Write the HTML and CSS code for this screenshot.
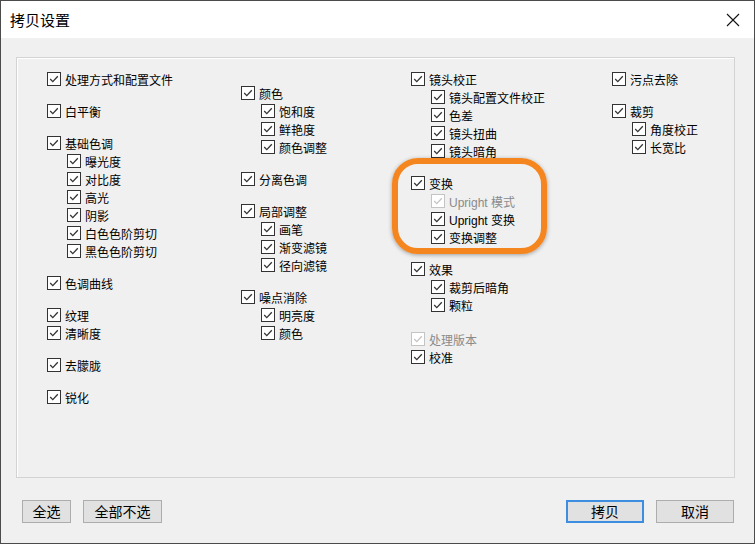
FILE: index.html
```html
<!DOCTYPE html>
<html lang="zh-CN">
<head>
  <meta charset="UTF-8" />
  <title>拷贝设置</title>
  <link rel="stylesheet" href="styles.css">
</head>
<body>
  <div class="window">
    <div class="titlebar">
      <span class="title">拷贝设置</span>
      <svg class="close" width="14" height="14" viewBox="0 0 14 14"><path d="M1 1 L13 13 M13 1 L1 13" stroke="#111" stroke-width="1.1" fill="none"/></svg>
    </div>

    <div class="content">
      <div class="groupbox">
        <!-- column 1 -->
        <div class="col">
          <div class="grp">
            <div class="item"><span class="cb"></span>处理方式和配置文件</div>
          </div>
          <div class="grp">
            <div class="item"><span class="cb"></span>白平衡</div>
          </div>
          <div class="grp">
            <div class="item"><span class="cb"></span>基础色调</div>
            <div class="item sub"><span class="cb"></span>曝光度</div>
            <div class="item sub"><span class="cb"></span>对比度</div>
            <div class="item sub"><span class="cb"></span>高光</div>
            <div class="item sub"><span class="cb"></span>阴影</div>
            <div class="item sub"><span class="cb"></span>白色色阶剪切</div>
            <div class="item sub"><span class="cb"></span>黑色色阶剪切</div>
          </div>
          <div class="grp">
            <div class="item"><span class="cb"></span>色调曲线</div>
          </div>
          <div class="grp">
            <div class="item"><span class="cb"></span>纹理</div>
            <div class="item"><span class="cb"></span>清晰度</div>
          </div>
          <div class="grp">
            <div class="item"><span class="cb"></span>去朦胧</div>
          </div>
          <div class="grp">
            <div class="item"><span class="cb"></span>锐化</div>
          </div>
        </div>

        <!-- column 2 -->
        <div class="col col-low">
          <div class="grp">
            <div class="item"><span class="cb"></span>颜色</div>
            <div class="item sub"><span class="cb"></span>饱和度</div>
            <div class="item sub"><span class="cb"></span>鲜艳度</div>
            <div class="item sub"><span class="cb"></span>颜色调整</div>
          </div>
          <div class="grp">
            <div class="item"><span class="cb"></span>分离色调</div>
          </div>
          <div class="grp">
            <div class="item"><span class="cb"></span>局部调整</div>
            <div class="item sub"><span class="cb"></span>画笔</div>
            <div class="item sub"><span class="cb"></span>渐变滤镜</div>
            <div class="item sub"><span class="cb"></span>径向滤镜</div>
          </div>
          <div class="grp">
            <div class="item"><span class="cb"></span>噪点消除</div>
            <div class="item sub"><span class="cb"></span>明亮度</div>
            <div class="item sub"><span class="cb"></span>颜色</div>
          </div>
        </div>

        <!-- column 3 -->
        <div class="col">
          <div class="grp">
            <div class="item"><span class="cb"></span>镜头校正</div>
            <div class="item sub"><span class="cb"></span>镜头配置文件校正</div>
            <div class="item sub"><span class="cb"></span>色差</div>
            <div class="item sub"><span class="cb"></span>镜头扭曲</div>
            <div class="item sub"><span class="cb"></span>镜头暗角</div>
          </div>
          <div class="grp">
            <div class="item"><span class="cb"></span>变换</div>
            <div class="item sub off"><span class="cb"></span>Upright 模式</div>
            <div class="item sub"><span class="cb"></span>Upright 变换</div>
            <div class="item sub"><span class="cb"></span>变换调整</div>
          </div>
          <div class="grp">
            <div class="item"><span class="cb"></span>效果</div>
            <div class="item sub"><span class="cb"></span>裁剪后暗角</div>
            <div class="item sub"><span class="cb"></span>颗粒</div>
          </div>
          <div class="grp grp-wide">
            <div class="item off"><span class="cb"></span>处理版本</div>
            <div class="item"><span class="cb"></span>校准</div>
          </div>
        </div>

        <!-- column 4 -->
        <div class="col">
          <div class="grp">
            <div class="item"><span class="cb"></span>污点去除</div>
          </div>
          <div class="grp">
            <div class="item"><span class="cb"></span>裁剪</div>
            <div class="item sub"><span class="cb"></span>角度校正</div>
            <div class="item sub"><span class="cb"></span>长宽比</div>
          </div>
        </div>

        <div class="highlight"></div>
      </div>

      <div class="buttons">
        <button class="btn btn-all">全选</button>
        <button class="btn btn-none">全部不选</button>
        <span class="spacer"></span>
        <button class="btn btn-ok">拷贝</button>
        <button class="btn btn-cancel">取消</button>
      </div>
    </div>
  </div>
</body>
</html>
```

FILE: styles.css
```css
html, body {
  margin: 0;
  padding: 0;
  background: #f0f0f0;
}

body {
  font-family: "Liberation Sans", "Noto Sans CJK SC", sans-serif;
  font-size: 12px;
  color: #000;
}

.window {
  width: 753px;
  height: 542px;
  border: 1px solid #4b4b4b;
  background: #f0f0f0;
  display: flex;
  flex-direction: column;
}

.titlebar {
  height: 37px;
  background: #fff;
  display: flex;
  align-items: center;
  padding: 0 14px 0 9px;
}

.title {
  font-family: "Noto Sans CJK SC", sans-serif;
  font-size: 15px;
  flex: 1;
}

.close {
  display: block;
}

.content {
  padding: 19px 0 0 15px;
}

.groupbox {
  position: relative;
  box-sizing: border-box;
  width: 719px;
  height: 421px;
  border: 1px solid #d3d3d3;
  box-shadow: inset 1px 1px 0 #fff;
  padding: 12px 0 0 30px;
  display: grid;
  grid-template-columns: 194px 170px 201px 1fr;
}

.col-low {
  padding-top: 14px;
}

.grp + .grp {
  margin-top: 14px;
}

.grp.grp-wide {
  margin-top: 16px;
}

.item {
  height: 18px;
  display: flex;
  align-items: center;
  gap: 4px;
  white-space: nowrap;
}

.item.sub {
  padding-left: 20px;
}

.cb {
  box-sizing: border-box;
  width: 14px;
  height: 14px;
  border: 1px solid #333;
  background: #fff url("data:image/svg+xml,%3Csvg xmlns='http://www.w3.org/2000/svg' width='12' height='12' viewBox='0 0 12 12'%3E%3Cpath d='M2.2 6 L4.8 8.6 L9.8 3.2' stroke='%23333' stroke-width='1.3' fill='none'/%3E%3C/svg%3E") center no-repeat;
  flex: none;
}

.item.off {
  color: #8a8a8a;
}

.item.off .cb {
  border-color: #c4c4c4;
  background-image: url("data:image/svg+xml,%3Csvg xmlns='http://www.w3.org/2000/svg' width='12' height='12' viewBox='0 0 12 12'%3E%3Cpath d='M2.2 6 L4.8 8.6 L9.8 3.2' stroke='%23c4c4c4' stroke-width='1.3' fill='none'/%3E%3C/svg%3E");
}

.highlight {
  position: absolute;
  left: 375px;
  top: 100px;
  width: 155px;
  height: 96px;
  box-sizing: border-box;
  border: 6px solid #f5861f;
  border-radius: 26px;
  box-shadow: 0 1px 4px rgba(0, 0, 0, 0.35);
  pointer-events: none;
}

.buttons {
  display: flex;
  gap: 12px;
  margin-top: 22px;
  padding: 0 20px 0 6px;
}

.spacer {
  flex: 1;
}

.btn {
  height: 23px;
  box-sizing: border-box;
  background: #e1e1e1;
  border: 1px solid #adadad;
  font-family: "Noto Sans CJK SC", sans-serif;
  font-size: 14px;
  line-height: 19px;
  padding: 0;
  color: #000;
}

.btn-all {
  width: 49px;
}

.btn-none {
  width: 79px;
}

.btn-ok,
.btn-cancel {
  width: 78px;
}

.btn-ok {
  border: 2px solid #3d8ee0;
}
```
